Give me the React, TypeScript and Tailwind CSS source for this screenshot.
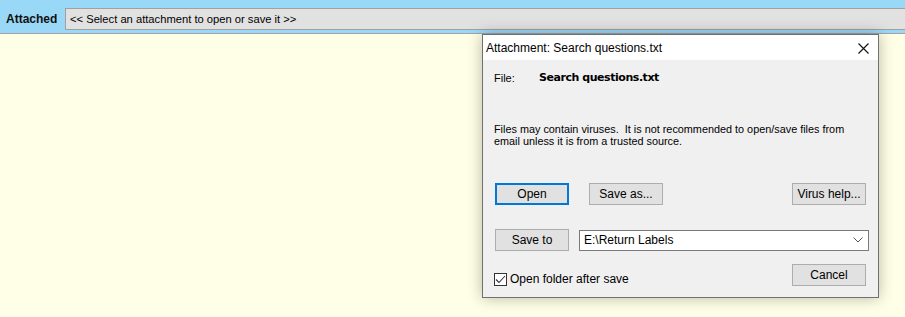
import React from 'react';

const btn =
  'h-[22px] w-[74px] border border-[#adadad] bg-[#e1e1e1] text-[12px] leading-none text-black flex items-center justify-center';

export default function App() {
  return (
    <div className="w-[905px] h-[317px] flex flex-col bg-[#ffffe7] overflow-hidden font-['Liberation_Sans','Noto_Sans',sans-serif]">
      {/* Header bar */}
      <div className="h-[34px] shrink-0 bg-[#99d9f7] border-b border-[#a3a3a3] flex items-start pt-[8px]">
        <span className="pl-[6px] w-[65px] h-[22px] flex items-center text-[12px] font-bold text-[#111]">
          Attached
        </span>
        <div className="flex-1 h-[22px] bg-[#e1e1e1] border-y border-l border-[#a0a0a0] flex items-center pl-[4px] text-[11.2px] text-black whitespace-nowrap">
          &lt;&lt; Select an attachment to open or save it &gt;&gt;
        </div>
      </div>

      {/* Content area */}
      <div className="relative flex-1">
        {/* Attachment dialog */}
        <div className="absolute left-[482px] top-0 w-[397px] h-[264px] border border-[#707070] bg-[#f0f0f0] shadow-[0_0_14px_rgba(0,0,0,0.28)] flex flex-col">
          {/* Title bar */}
          <div className="h-[25px] bg-white flex items-center justify-between pl-[3px] pr-[9px] text-[12px] text-black">
            <span>Attachment: Search questions.txt</span>
            <svg width="11" height="11" viewBox="0 0 11 11" className="mt-[1px]">
              <path d="M0.5 0.5 L10.5 10.5 M10.5 0.5 L0.5 10.5" stroke="#111" strokeWidth="1.1" />
            </svg>
          </div>

          <div className="flex-1 flex flex-col px-[11px] text-[11px] text-black">
            <div className="flex items-center h-[14px] mt-[11px]">
              <span className="w-[45px]">File:</span>
              <span className="font-bold text-[11px] font-['DejaVu_Sans',sans-serif] tracking-[-0.45px]">Search questions.txt</span>
            </div>

            <p className="mt-[38px] leading-[12px] whitespace-nowrap text-[10.85px]">
              Files may contain viruses.&nbsp; It is not recommended to open/save files from
              <br />
              email unless it is from a trusted source.
            </p>

            <div className="mt-[36px] flex items-center pl-[1px]">
              <button className={btn + ' !border-2 !border-[#0078d7]'}>Open</button>
              <button className={btn + ' ml-[20px]'}>Save as...</button>
              <button className={btn + ' ml-auto mr-[1px]'}>Virus help...</button>
            </div>

            <div className="mt-[24px] flex items-center pl-[1px] mr-[-2px]">
              <button className={btn + ' w-[73px]'}>Save to</button>
              <div className="ml-[10px] flex-1 h-[21px] bg-white border border-[#7a7a7a] flex items-center justify-between pl-[4px] pr-[5px] text-[12px]">
                <span>E:\Return Labels</span>
                <svg width="10" height="6" viewBox="0 0 10 6">
                  <path d="M0.5 0.5 L5 5 L9.5 0.5" stroke="#555" strokeWidth="1" fill="none" />
                </svg>
              </div>
            </div>

            <div className="mt-[13px] flex items-start">
              <label className="flex items-center mt-[6px] text-[12px]">
                <span className="w-[13px] h-[13px] bg-white border border-[#333] flex items-center justify-center">
                  <svg width="11" height="9" viewBox="0 0 11 9">
                    <path d="M1 4.5 L4 7.5 L10 1" stroke="#333" strokeWidth="1.1" fill="none" />
                  </svg>
                </span>
                <span className="ml-[3px]">Open folder after save</span>
              </label>
              <button className={btn + ' ml-auto mr-[1px] h-[21px]'}>Cancel</button>
            </div>
          </div>
        </div>
      </div>
    </div>
  );
}
